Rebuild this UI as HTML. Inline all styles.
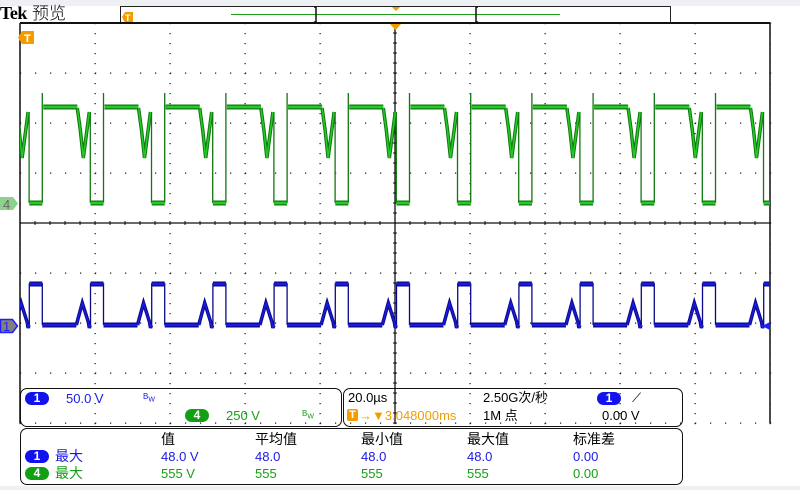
<!DOCTYPE html>
<html><head><meta charset="utf-8">
<style>
body{margin:0;width:800px;height:490px;background:#fff;position:relative;overflow:hidden;font-family:"Liberation Sans","Noto Sans CJK SC",sans-serif;}
.t{position:absolute;font-size:13px;white-space:nowrap;line-height:1;}
.b{color:#1a1ae6}.g{color:#12a012}.o{color:#f39c00}
.badge{position:absolute;width:24px;height:13px;border-radius:7px;color:#fff;font-size:12px;font-weight:bold;text-align:center;line-height:13px;}
.panel{position:absolute;border:1.5px solid #111;border-radius:7px;box-sizing:border-box;}
</style></head><body>
<div style="position:absolute;left:0;top:0;width:800px;height:6px;background:#eff0f4"></div>
<div style="position:absolute;left:0;top:486px;width:800px;height:4px;background:#eff0f4"></div>
<div class="t" style="left:0;top:4px;font-size:18px;font-family:'Liberation Serif',serif;font-weight:bold;letter-spacing:-0.5px">Tek</div>
<div class="t" style="left:32px;top:3px;font-size:17px;font-family:'Noto Sans CJK SC',sans-serif;font-weight:300">预览</div>
<svg id="s" width="800" height="490" style="position:absolute;left:0;top:0"></svg>
<div class="panel" style="left:20px;top:388px;width:322px;height:39px"></div>
<div class="panel" style="left:343px;top:388px;width:340px;height:39px"></div>
<div class="panel" style="left:20px;top:428px;width:663px;height:57px"></div>
<div class="badge" style="left:25px;top:392px;background:#1212ee">1</div>
<div class="t b" style="left:66px;top:392px">50.0 V</div>
<div class="t b" style="left:143px;top:393px;font-size:8px">B<sub style="font-size:7px">W</sub></div>
<div class="badge" style="left:185px;top:409px;background:#12a012">4</div>
<div class="t g" style="left:226px;top:409px">250 V</div>
<div class="t g" style="left:302px;top:410px;font-size:8px">B<sub style="font-size:7px">W</sub></div>
<div class="t" style="left:348px;top:391px">20.0µs</div>
<div class="t" style="left:483px;top:391px">2.50G次/秒</div>
<div class="badge" style="left:597px;top:392px;background:#1212ee">1</div>
<div class="t" style="left:632px;top:391px">⟋</div>
<div style="position:absolute;left:347px;top:409px;width:11px;height:12px;background:#f39c00;color:#fff;font-size:11px;font-weight:bold;text-align:center;line-height:12px;border-radius:2px">T</div>
<div class="t o" style="left:359px;top:409px;font-size:13px">→▼3.048000ms</div>
<div class="t" style="left:483px;top:409px">1M 点</div>
<div class="t" style="left:602px;top:409px">0.00 V</div>
<div class="t" style="left:161px;top:432px;font-size:14px">值</div>
<div class="t" style="left:255px;top:432px;font-size:14px">平均值</div>
<div class="t" style="left:361px;top:432px;font-size:14px">最小值</div>
<div class="t" style="left:467px;top:432px;font-size:14px">最大值</div>
<div class="t" style="left:573px;top:432px;font-size:14px">标准差</div>
<div class="badge" style="left:25px;top:450px;background:#1212ee">1</div>
<div class="t b" style="left:55px;top:449px;font-size:14px">最大</div>
<div class="t b" style="left:161px;top:450px">48.0 V</div>
<div class="t b" style="left:255px;top:450px">48.0</div>
<div class="t b" style="left:361px;top:450px">48.0</div>
<div class="t b" style="left:467px;top:450px">48.0</div>
<div class="t b" style="left:573px;top:450px">0.00</div>
<div class="badge" style="left:25px;top:467px;background:#12a012">4</div>
<div class="t g" style="left:55px;top:466px;font-size:14px">最大</div>
<div class="t g" style="left:161px;top:467px">555 V</div>
<div class="t g" style="left:255px;top:467px">555</div>
<div class="t g" style="left:361px;top:467px">555</div>
<div class="t g" style="left:467px;top:467px">555</div>
<div class="t g" style="left:573px;top:467px">0.00</div>
<script>
var s='';
s+='<rect x="120.5" y="6.5" width="550" height="16" fill="#fff" stroke="#222" stroke-width="1"/>';
s+='<line x1="231" y1="14.5" x2="560" y2="14.5" stroke="#1a9a1a" stroke-width="1"/>';
s+='<path d="M316 7v15M314 7h2M314 22h2M476 7v15M478 7h-2M478 22h-2" stroke="#111" stroke-width="1.5" fill="none"/>';
s+='<path d="M392 7h8l-4 4z" fill="#f39c00"/>';
s+='<path d="M122 17l3-5h8v11h-8z" fill="#f39c00"/><text x="125" y="21" font-size="9" fill="#fff" font-weight="bold" font-family="Liberation Sans">T</text>';
for(var x=20;x<=770;x+=75){for(var y=23;y<=423;y+=10){s+='<rect x="'+(x-0.5)+'" y="'+y+'" width="1.2" height="1.2" fill="#111"/>';}}
for(var y=23;y<=423;y+=50){for(var x=20;x<=770;x+=15){s+='<rect x="'+x+'" y="'+(y-0.5)+'" width="1.2" height="1.2" fill="#111"/>';}}
s+='<line x1="20" y1="223" x2="770" y2="223" stroke="#111" stroke-width="1.3"/>';
s+='<line x1="395" y1="23" x2="395" y2="423" stroke="#111" stroke-width="1.3"/>';
for(var x=20;x<=770;x+=15){s+='<line x1="'+x+'" y1="221" x2="'+x+'" y2="225" stroke="#111"/>';}
for(var y=23;y<=423;y+=10){s+='<line x1="393" y1="'+y+'" x2="397" y2="'+y+'" stroke="#111"/>';}
s+='<path d="M20 23V423M770 23V423" stroke="#111" stroke-width="1.5"/><line x1="20" y1="23" x2="770" y2="23" stroke="#111" stroke-width="2"/>';
s+='<path d="M390 24h11l-5.5 6z" fill="#f39c00"/>';
var P=61.2,x0=42.3,gv='',gd='',gb='',bv='',bt='',bb='';
for(var n=-1;n<13;n++){var r=x0+n*P;
 gv+='M'+(r-13)+' 203V203M'+r+' 203L'+r+' 166V93M'+(r+48)+' 112V203 ';
 gd+='M'+(r+35)+' 108L'+(r+38)+' 130L'+(r+41)+' 158L'+(r+44)+' 135L'+(r+47)+' 112 ';
 gb+='M'+(r+1)+' 107H'+(r+35)+'M'+(r-13)+' 203H'+(r)+' ';
 bv+='M'+(r-13)+' 325V283M'+r+' 283V325 ';
 bt+='M'+(r+34)+' 325L'+(r+40)+' 303L'+(r+46)+' 322L'+(r+47)+' 328L'+(r+48)+' 325 ';
 bb+='M'+(r-13)+' 284H'+r+'M'+r+' 325H'+(r+34)+' ';}
s+='<defs><clipPath id="c"><rect x="20" y="23" width="750" height="400"/></clipPath></defs><g clip-path="url(#c)" fill="none">';
s+='<path d="'+gv+'" stroke="#117711" stroke-width="1.3"/>';
s+='<path d="'+gd+'" stroke="#117711" stroke-width="3.5"/><path d="'+gd+'" stroke="#22cc22" stroke-width="1.5"/>';
s+='<path d="'+gb+'" stroke="#117711" stroke-width="5"/><path d="'+gb+'" stroke="#22cc22" stroke-width="2.5"/>';
s+='<path d="'+bv+'" stroke="#0a0a88" stroke-width="1.3"/>';
s+='<path d="'+bt+'" stroke="#0a0a88" stroke-width="3.5"/><path d="'+bt+'" stroke="#1a1ae0" stroke-width="1.5"/>';
s+='<path d="'+bb+'" stroke="#0a0a88" stroke-width="5"/><path d="'+bb+'" stroke="#1a1ae0" stroke-width="2.5"/></g>';
s+='<path d="M22 31h12v13h-12l-4-6.5z" fill="#f39c00"/><text x="24" y="42" font-size="11" fill="#fff" font-weight="bold" font-family="Liberation Sans">T</text>';
s+='<path d="M0 197h13l5 6.5-5 6.5h-13z" fill="#8ed08e"/><text x="3" y="209" font-size="13" fill="#666" font-family="Liberation Sans">4</text>';
s+='<path d="M0.5 319.5h12l5 6.5-5 6.5h-12z" fill="#808080" stroke="#2020ff" stroke-width="1.5"/><text x="3" y="331" font-size="13" fill="#2020ff" font-family="Liberation Sans">1</text>';
s+='<path d="M770 322l-8 4 8 4z" fill="#2020ff"/>';
document.getElementById('s').innerHTML=s;
</script>
</body></html>
